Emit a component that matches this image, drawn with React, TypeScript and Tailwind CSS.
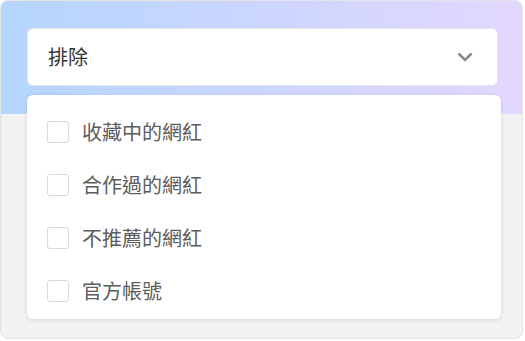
const options = ["收藏中的網紅", "合作過的網紅", "不推薦的網紅", "官方帳號"];

export default function App() {
  return (
    <div
      className="w-[525px] h-[341px] bg-white"
      style={{ fontFamily: '"Noto Sans CJK TC", "Noto Sans", sans-serif' }}
    >
      <div className="w-[523px] h-[339px] rounded-lg border border-[#e4e4e4] bg-[#f2f2f2] bg-[linear-gradient(to_right,#b4d5ff,#e3d7ff)] bg-no-repeat bg-[length:100%_113px] px-[26px] pt-[27px] overflow-hidden">
        <div className="w-[471px] h-[58px] rounded-md border border-[#e6e6e6] bg-white flex items-center justify-between pl-[20px] pr-[24px]">
          <span className="text-[20px] text-[#333]">排除</span>
          <svg width="16" height="10" viewBox="0 0 16 10" fill="none">
            <path d="M1.5 1.5 L8 8 L14.5 1.5" stroke="#8a8a92" strokeWidth="2.6" />
          </svg>
        </div>
        <div className="mt-[9px] w-[474px] h-[224px] rounded-md bg-white shadow-[0_1px_4px_rgba(0,0,0,0.12)] pt-[10px] pl-[20px]">
          {options.map((o) => (
            <div key={o} className="h-[53px] flex items-center gap-[13px]">
              <div className="w-[22px] h-[22px] rounded-[3px] border border-[#d9d9d9] bg-white" />
              <span className="text-[20px] text-[#5c5c5c]">{o}</span>
            </div>
          ))}
        </div>
      </div>
    </div>
  );
}
